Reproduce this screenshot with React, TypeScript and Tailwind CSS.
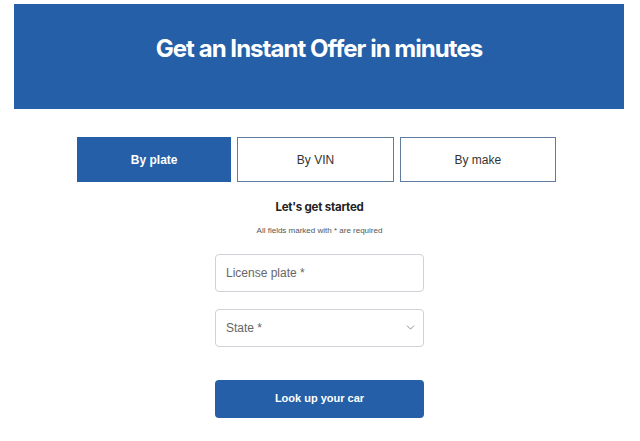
import { ChevronDown } from 'lucide-react';

const tabs = [
  { label: 'By plate', active: true },
  { label: 'By VIN', active: false },
  { label: 'By make', active: false },
];

export default function App() {
  return (
    <div className="min-h-[441px] bg-white font-['Liberation_Sans',Arial,sans-serif] text-[#1f2937]">
      <div className="pt-1 px-[14px] pr-4">
        <div className="h-[105px] bg-[#245fa8] flex justify-center pt-[33px]">
          <h1 className="font-['Inter',sans-serif] text-[24px] font-bold tracking-[-0.04em] text-white leading-none h-fit">
            Get an Instant Offer in minutes
          </h1>
        </div>
      </div>

      <div className="mt-[28px] ml-[77px] w-[479px] flex gap-[6px]">
        {tabs.map((tab) => (
          <button
            key={tab.label}
            className={
              tab.active
                ? 'flex-1 h-[45px] bg-[#245fa8] text-white text-[12px] font-bold'
                : 'flex-1 h-[45px] bg-white border border-[#5f7c9c] text-[#333] text-[12px]'
            }
          >
            {tab.label}
          </button>
        ))}
      </div>

      <div className="flex flex-col items-center pr-[1px]">
        <h2 className="mt-[20px] font-['Inter',sans-serif] text-[11.5px] font-bold tracking-[-0.02em] text-[#222] leading-none">
          Let&apos;s get started
        </h2>
        <p className="mt-[13px] text-[8px] text-[#555] leading-none">All fields marked with * are required</p>

        <div className="mt-[19px] w-[209px] flex flex-col gap-[17px]">
          <div className="h-[38px] rounded-[4px] border border-[#cfd2d6] flex items-center px-[10px] text-[12px] text-[#666]">
            License plate *
          </div>
          <div className="h-[38px] rounded-[4px] border border-[#cfd2d6] flex items-center justify-between pl-[10px] pr-[6px] text-[12px] text-[#666]">
            State *
            <ChevronDown className="w-[13px] h-[13px] text-[#777]" strokeWidth={1.5} />
          </div>
          <button className="mt-[16px] h-[38px] rounded-[4px] bg-[#245fa8] text-white text-[11px] font-bold">
            Look up your car
          </button>
        </div>
      </div>
    </div>
  );
}
